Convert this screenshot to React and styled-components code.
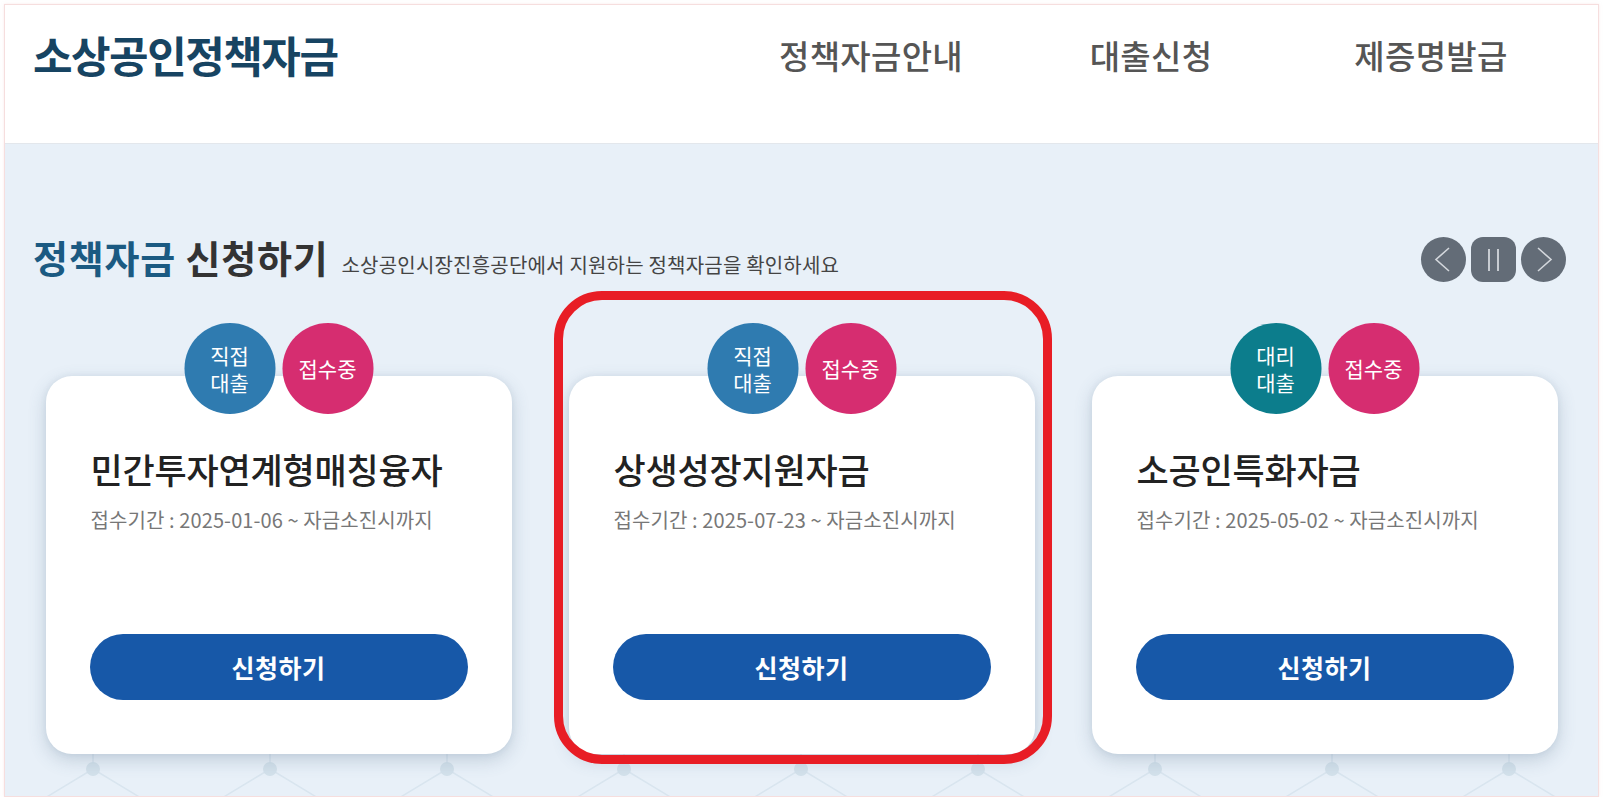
import React from "react";
import styled, { createGlobalStyle } from "styled-components";

const funds = [
    { type: ["직접", "대출"], tone: "direct", title: "민간투자연계형매칭융자", period: "접수기간 : 2025-01-06 ~ 자금소진시까지" },
    { type: ["직접", "대출"], tone: "direct", title: "상생성장지원자금", period: "접수기간 : 2025-07-23 ~ 자금소진시까지", highlight: true },
    { type: ["대리", "대출"], tone: "agency", title: "소공인특화자금", period: "접수기간 : 2025-05-02 ~ 자금소진시까지" },
];

const navItems = ["정책자금안내", "대출신청", "제증명발급"];

// bottom network decoration, drawn as an svg tile
const pattern = encodeURIComponent(
    `<svg xmlns="http://www.w3.org/2000/svg" width="177" height="60">` +
    `<g stroke="#d9e5ef" stroke-width="1.5" fill="none">` +
    `<line x1="88" y1="0" x2="88" y2="33"/>` +
    `<line x1="88" y1="33" x2="40" y2="62"/>` +
    `<line x1="88" y1="33" x2="136" y2="62"/>` +
    `</g><circle cx="88" cy="33" r="7" fill="#d3e1eb"/></svg>`
);

function App() {
    return (
        <>
            <GlobalStyle />
            <Frame>
                <Header>
                    <HeaderRow>
                        <Logo>소상공인정책자금</Logo>
                        <Nav>
                            {navItems.map((item) => (
                                <NavItem key={item}>{item}</NavItem>
                            ))}
                        </Nav>
                    </HeaderRow>
                </Header>
                <Section>
                    <TitleRow>
                        <TitleGroup>
                            <Title>
                                <em>정책자금</em> 신청하기
                            </Title>
                            <Subtitle>소상공인시장진흥공단에서 지원하는 정책자금을 확인하세요</Subtitle>
                        </TitleGroup>
                        <Controls>
                            <CtrlButton aria-label="이전">
                                <svg width="45" height="45" viewBox="0 0 45 45">
                                    <polyline points="28,11 15,22.5 28,34" fill="none" stroke="#d3d7dc" strokeWidth="1.6" />
                                </svg>
                            </CtrlButton>
                            <CtrlButton square aria-label="정지">
                                <svg width="45" height="45" viewBox="0 0 45 45">
                                    <line x1="18" y1="12" x2="18" y2="34" stroke="#d3d7dc" strokeWidth="1.8" />
                                    <line x1="27" y1="12" x2="27" y2="34" stroke="#d3d7dc" strokeWidth="1.8" />
                                </svg>
                            </CtrlButton>
                            <CtrlButton aria-label="다음">
                                <svg width="45" height="45" viewBox="0 0 45 45">
                                    <polyline points="17,11 30,22.5 17,34" fill="none" stroke="#d3d7dc" strokeWidth="1.6" />
                                </svg>
                            </CtrlButton>
                        </Controls>
                    </TitleRow>
                    <CardRow>
                        {funds.map((fund) => (
                            <Card key={fund.title}>
                                <Badges>
                                    <Badge tone={fund.tone}>
                                        <BadgeLine>{fund.type[0]}</BadgeLine>
                                        <BadgeLine>{fund.type[1]}</BadgeLine>
                                    </Badge>
                                    <Badge tone="open">
                                        <BadgeLine>접수중</BadgeLine>
                                    </Badge>
                                </Badges>
                                <CardTitle>{fund.title}</CardTitle>
                                <Period>{fund.period}</Period>
                                <ApplyButton>신청하기</ApplyButton>
                                {fund.highlight && <Highlight />}
                            </Card>
                        ))}
                    </CardRow>
                </Section>
            </Frame>
        </>
    );
}

const GlobalStyle = createGlobalStyle`
  * { box-sizing: border-box; }
  body {
    margin: 0;
    background: #fff;
    font-family: "Noto Sans CJK KR", "Noto Sans", sans-serif;
  }
`;

const Frame = styled.div`
  margin: 4px 5px 0 4px;
  height: 793px;
  border: 1px solid #f6dede;
  box-shadow: 0 0 3px rgba(240, 200, 200, 0.35);
  display: flex;
  flex-direction: column;
  overflow: hidden;
`;

const Header = styled.header`
  height: 139px;
  flex-shrink: 0;
  background: #fff;
  border-bottom: 1px solid #e3e7ec;
`;

const HeaderRow = styled.div`
  height: 98px;
  display: flex;
  align-items: center;
  padding: 0 27px 0 28px;
`;

const Logo = styled.h1`
  margin: 0;
  font-size: 43px;
  font-weight: 700;
  letter-spacing: -1.5px;
  color: #174462;
`;

const Nav = styled.nav`
  margin-left: auto;
  display: flex;
  padding-top: 2px;
`;

const NavItem = styled.a`
  width: 280px;
  text-align: center;
  font-size: 33px;
  font-weight: 500;
  letter-spacing: 0.3px;
  color: #555;
  cursor: pointer;
`;

const Section = styled.section`
  flex: 1;
  background-color: #e8f0f8;
  background-image: url("data:image/svg+xml,${pattern}");
  background-repeat: repeat-x;
  background-position: 0 bottom;
  padding-top: 89px;
`;

const TitleRow = styled.div`
  height: 46px;
  display: flex;
  align-items: center;
  justify-content: space-between;
  padding: 0 32px 0 28px;
`;

const TitleGroup = styled.div`
  display: flex;
  align-items: baseline;
  gap: 13px;
`;

const Title = styled.h2`
  margin: 0;
  font-size: 38px;
  font-weight: 700;
  letter-spacing: 0.8px;
  color: #333;

  em {
    font-style: normal;
    color: #1b5a82;
  }
`;

const Subtitle = styled.p`
  margin: 0;
  font-size: 20px;
  letter-spacing: 0.2px;
  color: #444;
`;

const Controls = styled.div`
  display: flex;
  gap: 5px;
  margin-top: 6px;
`;

const CtrlButton = styled.button`
  width: 45px;
  height: 45px;
  padding: 0;
  border: none;
  border-radius: ${({ square }) => (square ? "12px" : "50%")};
  background: #636c77;
  cursor: pointer;
  display: flex;

  svg {
    display: block;
  }
`;

const CardRow = styled.div`
  display: flex;
  justify-content: center;
  gap: 57px;
  margin-top: 97px;
`;

const Card = styled.article`
  position: relative;
  width: 466px;
  height: 378px;
  display: flex;
  flex-direction: column;
  padding: 70px 44px 54px 45px;
  background: #fff;
  border-radius: 26px;
  box-shadow: 0 6px 18px rgba(70, 100, 130, 0.24), 0 0 6px rgba(70, 100, 130, 0.08);
`;

const Badges = styled.div`
  position: absolute;
  top: -53px;
  left: 50%;
  transform: translateX(-50%);
  display: flex;
  gap: 7px;
`;

const badgeColors = {
    direct: "#2f7bb0",
    agency: "#0c7d8c",
    open: "#d62d70",
};

const Badge = styled.span`
  width: 91px;
  height: 91px;
  border-radius: 50%;
  display: flex;
  flex-direction: column;
  align-items: center;
  justify-content: center;
  background: ${({ tone }) => badgeColors[tone]};
  color: #fff;
`;

const BadgeLine = styled.span`
  display: block;
  font-size: 21px;
  line-height: 27px;
  letter-spacing: 0;
`;

const CardTitle = styled.h3`
  margin: 0;
  font-size: 35px;
  font-weight: 500;
  line-height: 46px;
  letter-spacing: -0.2px;
  color: #222;
`;

const Period = styled.p`
  margin: 14px 0 0;
  font-size: 20px;
  line-height: 28px;
  letter-spacing: 0.1px;
  color: #777;
`;

const ApplyButton = styled.button`
  margin-top: auto;
  margin-left: -1px;
  width: 378px;
  height: 66px;
  border: none;
  border-radius: 33px;
  background: #1758a8;
  color: #fff;
  font-family: inherit;
  font-size: 25px;
  font-weight: 700;
  letter-spacing: 0.5px;
  cursor: pointer;
`;

const Highlight = styled.div`
  position: absolute;
  top: -85px;
  left: -15px;
  right: -17px;
  bottom: -10px;
  border: 9px solid #e81d25;
  border-radius: 48px;
  pointer-events: none;
`;

export default App;
